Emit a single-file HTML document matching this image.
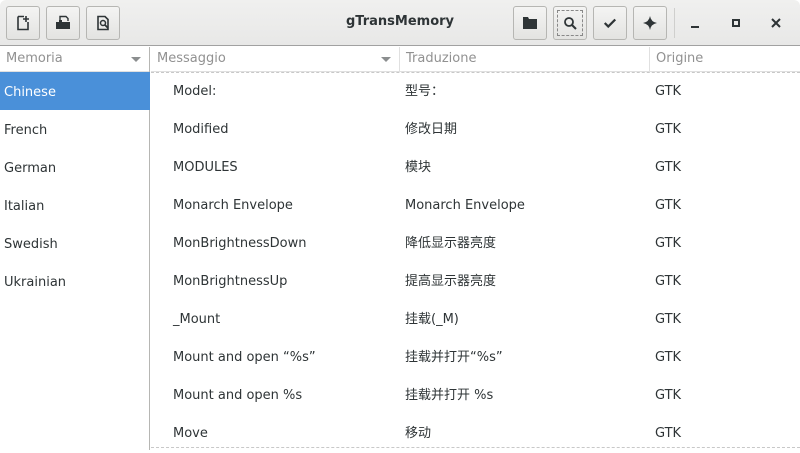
<!DOCTYPE html>
<html><head><meta charset="utf-8"><style>
*{margin:0;padding:0;box-sizing:border-box}
body{width:800px;height:450px;overflow:hidden;background:#fff;font-family:"DejaVu Sans","Liberation Sans","Noto Sans CJK SC",sans-serif;font-size:13px;color:#2e3436;position:relative}
.hb{position:absolute;left:0;top:0;width:800px;height:46px;background:linear-gradient(#f0f0ef,#e8e8e7);border-bottom:1px solid #a1a1a1;border-radius:6px 6px 0 0}
.btn{position:absolute;top:6px;width:34px;height:34px;border:1px solid #b6b6b3;border-radius:3px;background:linear-gradient(#f4f4f3,#e3e3e1);display:flex;align-items:center;justify-content:center}
.title{position:absolute;left:0;width:800px;top:14px;text-align:center;font-weight:bold;font-size:13px;color:#2e3436}
.side{position:absolute;left:0;top:47px;width:150px;height:403px;border-right:1px solid #b6b6b3}
.colh{position:absolute;top:47px;height:25px;color:#919191;font-size:13px;line-height:24px;padding-left:6px;border-bottom:1px solid #e0e0e0}
.arr{position:absolute;right:8px;top:10px;width:0;height:0;border-left:5px solid transparent;border-right:5px solid transparent;border-top:5px solid #8b8e8f}
.srow{position:absolute;left:0;width:150px;height:38px;line-height:34px;padding-top:4px;padding-left:4px;font-size:13px}
.sel{background:#4a90d9;color:#fff}
.row{position:absolute;left:151px;width:649px;height:38px;line-height:38px}
.row span{position:absolute}
.dash{position:absolute;left:151px;width:649px;height:0;border-top:1px dashed #c8c8c8}
</style></head><body>
<div class="hb">
<div class="btn" style="left:6px"><svg width="16" height="16" viewBox="0 0 16 16"><path d="M3 1.5h6M3 1.5v13h10V7" fill="none" stroke="#2e3436" stroke-width="1.6"/><path d="M11 1v6M8 4h6" stroke="#2e3436" stroke-width="1.6"/></svg></div>
<div class="btn" style="left:46px"><svg width="16" height="16" viewBox="0 0 16 16"><path d="M1 7h3v-2h3v2h8v7H1z" fill="#2e3436"/><path d="M5 5V1.5h6l2 2V6" fill="none" stroke="#2e3436" stroke-width="1.4"/></svg></div>
<div class="btn" style="left:86px"><svg width="16" height="16" viewBox="0 0 16 16"><path d="M3 1.5h7l3 3v10H3z" fill="none" stroke="#2e3436" stroke-width="1.6"/><circle cx="8" cy="8" r="2.5" fill="none" stroke="#2e3436" stroke-width="1.5"/><path d="M10 10l3 3" stroke="#2e3436" stroke-width="1.8"/></svg></div>
<div class="title">gTransMemory</div>
<div class="btn" style="left:513px"><svg width="16" height="16" viewBox="0 0 16 16"><path d="M1 2h5l1 2h8v10H1z" fill="#2e3436"/></svg></div>
<div class="btn" style="left:553px;border-style:solid"><div style="position:absolute;left:3px;top:3px;right:3px;bottom:3px;border:1px dashed #888"></div><svg width="16" height="16" viewBox="0 0 16 16"><circle cx="7" cy="7" r="4" fill="none" stroke="#2e3436" stroke-width="1.8"/><path d="M10 10l4 4" stroke="#2e3436" stroke-width="2"/></svg></div>
<div class="btn" style="left:593px"><svg width="14" height="14" viewBox="0 0 16 16"><path d="M2 8l4 4 8-8" fill="none" stroke="#2e3436" stroke-width="2.6"/></svg></div>
<div class="btn" style="left:633px"><svg width="16" height="16" viewBox="0 0 16 16"><path d="M8 1Q9 7 15 8Q9 9 8 15Q7 9 1 8Q7 7 8 1z" fill="#2e3436"/></svg></div>
<div style="position:absolute;left:674px;top:8px;width:1px;height:30px;background:#cfcfcd"></div>
<div style="position:absolute;left:691px;top:26px;width:8px;height:2px;background:#2e3436"></div>
<div style="position:absolute;left:732px;top:19px;width:8px;height:8px;border:2px solid #2e3436"></div>
<svg style="position:absolute;left:771px;top:18px" width="10" height="10"><path d="M1 1l8 8M9 1l-8 8" stroke="#2e3436" stroke-width="2"/></svg>
</div>
<div class="side">
<div class="colh" style="left:0;top:0;width:149px;padding-left:6px">Memoria<div class="arr"></div></div>
<div class="srow sel" style="top:25px">Chinese</div>
<div class="srow" style="top:63px">French</div>
<div class="srow" style="top:101px">German</div>
<div class="srow" style="top:139px">Italian</div>
<div class="srow" style="top:177px">Swedish</div>
<div class="srow" style="top:215px">Ukrainian</div>
</div>
<div class="colh" style="left:151px;width:249px;border-right:1px solid #e0e0e0">Messaggio<div class="arr"></div></div>
<div class="colh" style="left:400px;width:250px;border-right:1px solid #e0e0e0">Traduzione</div>
<div class="colh" style="left:650px;width:150px">Origine</div>
<div class="dash" style="top:72px"></div>
<div class="dash" style="top:447px"></div>
<div class="row" style="top:73px"><span style="left:22px">Model:</span><span style="left:254px">型号：</span><span style="left:504px">GTK</span></div>
<div class="row" style="top:111px"><span style="left:22px">Modified</span><span style="left:254px">修改日期</span><span style="left:504px">GTK</span></div>
<div class="row" style="top:149px"><span style="left:22px">MODULES</span><span style="left:254px">模块</span><span style="left:504px">GTK</span></div>
<div class="row" style="top:187px"><span style="left:22px">Monarch Envelope</span><span style="left:254px">Monarch Envelope</span><span style="left:504px">GTK</span></div>
<div class="row" style="top:225px"><span style="left:22px">MonBrightnessDown</span><span style="left:254px">降低显示器亮度</span><span style="left:504px">GTK</span></div>
<div class="row" style="top:263px"><span style="left:22px">MonBrightnessUp</span><span style="left:254px">提高显示器亮度</span><span style="left:504px">GTK</span></div>
<div class="row" style="top:301px"><span style="left:22px">_Mount</span><span style="left:254px">挂载(_M)</span><span style="left:504px">GTK</span></div>
<div class="row" style="top:339px"><span style="left:22px">Mount and open “%s”</span><span style="left:254px">挂载并打开“%s”</span><span style="left:504px">GTK</span></div>
<div class="row" style="top:377px"><span style="left:22px">Mount and open %s</span><span style="left:254px">挂载并打开 %s</span><span style="left:504px">GTK</span></div>
<div class="row" style="top:415px"><span style="left:22px">Move</span><span style="left:254px">移动</span><span style="left:504px">GTK</span></div>
</body></html>
